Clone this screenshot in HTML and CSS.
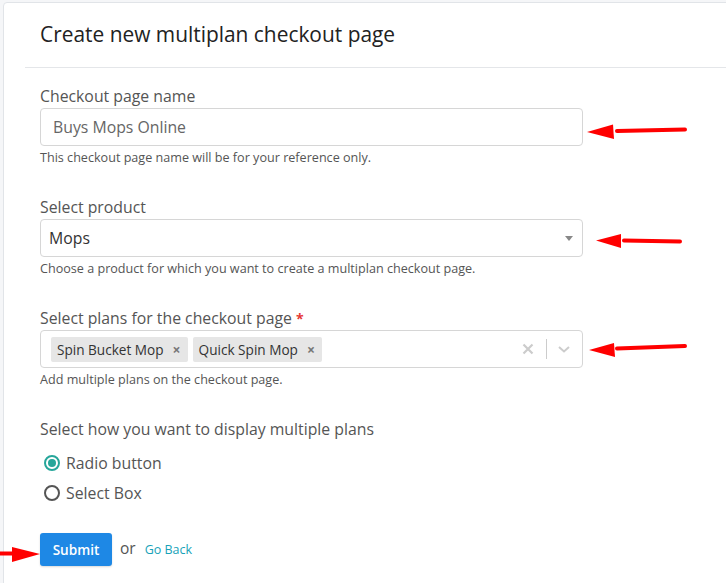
FILE: index.html
```html
<!DOCTYPE html>
<html>
<head>
<meta charset="utf-8">
<link rel="stylesheet" href="styles.css">
</head>
<body>
<div class="card">
  <div class="card-header">
    <h1 class="title">Create new multiplan checkout page</h1>
  </div>
  <form class="card-body">
    <div class="group">
      <label class="label">Checkout page name</label>
      <div class="control">Buys Mops Online</div>
      <p class="help">This checkout page name will be for your reference only.</p>
    </div>
    <div class="group">
      <label class="label">Select product</label>
      <div class="control select">
        <span class="select-value">Mops</span>
        <span class="caret"></span>
      </div>
      <p class="help">Choose a product for which you want to create a multiplan checkout page.</p>
    </div>
    <div class="group">
      <label class="label">Select plans for the checkout page <span class="req">*</span></label>
      <div class="control multi">
        <div class="tags">
          <span class="tag">Spin Bucket Mop <span class="tag-x">×</span></span>
          <span class="tag">Quick Spin Mop <span class="tag-x">×</span></span>
        </div>
        <div class="indicators">
          <svg class="clear" width="20" height="20" viewBox="0 0 20 20"><path d="M5.5 5.5 L14.5 14.5 M14.5 5.5 L5.5 14.5" stroke="#ccc" stroke-width="2.2" fill="none"/></svg>
          <span class="sep"></span>
          <svg class="chev" width="20" height="20" viewBox="0 0 20 20"><path d="M5 8 L10 12.5 L15 8" stroke="#ccc" stroke-width="2" fill="none"/></svg>
        </div>
      </div>
      <p class="help">Add multiple plans on the checkout page.</p>
    </div>
    <div class="group last">
      <label class="label">Select how you want to display multiple plans</label>
      <div class="radios">
        <div class="radio"><span class="dot checked"></span>Radio button</div>
        <div class="radio"><span class="dot"></span>Select Box</div>
      </div>
    </div>
    <div class="actions">
      <button type="button" class="btn">Submit</button>
      <span class="or">or</span>
      <a class="back">Go Back</a>
    </div>
  </form>
</div>

<svg class="arrow a1" width="102" height="16" viewBox="0 0 102 16"><path d="M98 5.5 L30 7" stroke="#f00" stroke-width="4" stroke-linecap="round" fill="none"/><path d="M0 8 L26 0.5 L27 15 Z" fill="#f00"/></svg>
<svg class="arrow a2" width="88" height="16" viewBox="0 0 88 16"><path d="M84 7.5 L28 6.5" stroke="#f00" stroke-width="4" stroke-linecap="round" fill="none"/><path d="M0 6.5 L25 0 L25 14 Z" fill="#f00"/></svg>
<svg class="arrow a3" width="100" height="16" viewBox="0 0 100 16"><path d="M96 4 L28 6.5" stroke="#f00" stroke-width="4" stroke-linecap="round" fill="none"/><path d="M0 8 L25 1 L26 15 Z" fill="#f00"/></svg>
<svg class="arrow a4" width="40" height="20" viewBox="0 0 40 20"><path d="M0 8.5 L16 8.5" stroke="#f00" stroke-width="4" fill="none"/><path d="M40 9 L12 2 L12 17 Z" fill="#f00"/></svg>
</body>
</html>
```

FILE: styles.css
```css
html, body {
  margin: 0;
  padding: 0;
}
body {
  background: #f5f6f8;
  font-family: "Open Sans", "Noto Sans", "Liberation Sans", sans-serif;
  color: #555;
  width: 726px;
  height: 583px;
  overflow: hidden;
  position: relative;
}
.card {
  margin: 2px 0 0 3px;
  width: 820px;
  height: 640px;
  background: #fff;
  border: 1px solid #e1e4e8;
  border-radius: 4px;
  box-sizing: border-box;
}
.card-header {
  margin-left: 21px;
  padding: 0 0 0 15px;
  height: 64px;
  border-bottom: 1px solid #e4e6e9;
  display: flex;
  align-items: center;
}
.title {
  margin: 0 0 2px 0;
  font-size: 20.9px;
  font-weight: 400;
  color: #222;
}
.card-body {
  padding: 18px 0 0 36px;
  width: 543px;
}
.group {
  margin-bottom: 31px;
}
.group.last {
  margin-bottom: 30px;
}
.label {
  display: block;
  font-size: 15.8px;
  line-height: 20px;
  height: 20px;
  color: #555;
  margin-bottom: 2px;
}
.req {
  color: #e53935;
  font-weight: 700;
  font-size: 14px;
}
.control {
  box-sizing: border-box;
  height: 38px;
  border: 1px solid #d6d6d6;
  border-radius: 4px;
  padding: 0 12px;
  display: flex;
  align-items: center;
  font-size: 15.8px;
  color: #666;
  background: #fff;
}
.select {
  justify-content: space-between;
  padding: 0 8px 0 8px;
  color: #333;
}
.caret {
  width: 0;
  height: 0;
  border-left: 4.5px solid transparent;
  border-right: 4.5px solid transparent;
  border-top: 5px solid #888;
  margin-right: 1px;
}
.help {
  margin: 4px 0 0 0;
  font-size: 12.6px;
  line-height: 16px;
  color: #555;
}
.multi {
  padding: 0 6px 0 10px;
  justify-content: space-between;
}
.tags {
  display: flex;
  gap: 5px;
}
.tag {
  background: #e6e6e6;
  border-radius: 2px;
  height: 25px;
  line-height: 25px;
  padding: 0 7px 0 6px;
  font-size: 13.6px;
  color: #333;
  display: flex;
  align-items: center;
}
.tag-x {
  margin-left: 9px;
  font-size: 14px;
  font-weight: 700;
  color: #777;
}
.indicators {
  display: flex;
  align-items: center;
}
.clear {
  margin-right: 8px;
}
.sep {
  width: 1px;
  height: 20px;
  background: #ccc;
  margin-right: 7px;
}
.chev {
  margin-right: 2px;
}
.radios {
  padding-top: 12px;
  display: flex;
  flex-direction: column;
  gap: 10px;
}
.radio {
  display: flex;
  align-items: center;
  height: 20px;
  font-size: 15.8px;
  color: #555;
  padding-left: 4px;
}
.dot {
  box-sizing: border-box;
  width: 16px;
  height: 16px;
  border: 2px solid #555;
  border-radius: 50%;
  margin-right: 6px;
  position: relative;
}
.dot.checked {
  border-color: #26a69a;
}
.dot.checked::after {
  content: "";
  position: absolute;
  left: 2px;
  top: 2px;
  width: 8px;
  height: 8px;
  border-radius: 50%;
  background: #26a69a;
}
.actions {
  display: flex;
  align-items: center;
}
.btn {
  box-sizing: border-box;
  width: 72px;
  height: 33px;
  border: none;
  border-radius: 3px;
  background: #1e88e5;
  color: #fff;
  font-family: inherit;
  font-size: 13.6px;
  font-weight: 600;
  box-shadow: 0 1px 2px rgba(0,0,0,0.15);
}
.or {
  margin-left: 8px;
  font-size: 15.5px;
  color: #555;
  position: relative;
  top: -2px;
}
.back {
  margin-left: 9px;
  font-size: 12.5px;
  color: #17a2b8;
}
.arrow {
  position: absolute;
}
.a1 { left: 587px; top: 124px; }
.a2 { left: 596px; top: 234px; }
.a3 { left: 589px; top: 342px; }
.a4 { left: 0px; top: 545px; }
```
